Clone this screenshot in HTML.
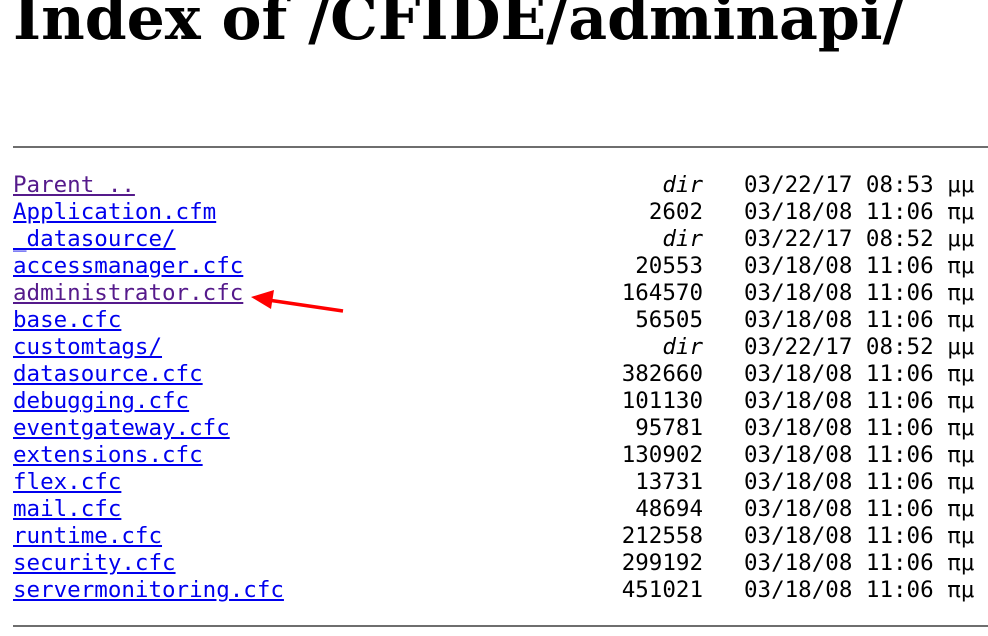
<!DOCTYPE html>
<html><head><meta charset="utf-8"><style>
html,body{margin:0;padding:0;background:#fff;width:988px;height:636px;overflow:hidden;position:relative}
h1{position:absolute;left:13px;top:-21px;margin:0;font:bold 60px/80px "DejaVu Serif","Liberation Serif",serif;white-space:nowrap;color:#000}
.hr{position:absolute;left:13px;width:975px;height:2px;background:#6e6e6e}
.r{position:absolute;left:0;width:988px;height:27px;font:22.5px/27px "DejaVu Sans Mono","Liberation Mono",monospace;color:#000}
.r a{position:absolute;left:13px;color:#0000ee;text-decoration:underline}
.r a.v{color:#551a8b}
.r .s{position:absolute;right:285px}
.r .s i{font-style:italic}
.r .d{position:absolute;left:744px;white-space:pre}
</style></head><body>
<h1>Index of /CFIDE/adminapi/</h1>
<div class="hr" style="top:146px"></div>
<div class="r" style="top:172px"><a class="v">Parent ..</a><span class="s"><i>dir</i></span><span class="d">03/22/17 08:53 μμ</span></div>
<div class="r" style="top:199px"><a>Application.cfm</a><span class="s">2602</span><span class="d">03/18/08 11:06 πμ</span></div>
<div class="r" style="top:226px"><a>_datasource/</a><span class="s"><i>dir</i></span><span class="d">03/22/17 08:52 μμ</span></div>
<div class="r" style="top:253px"><a>accessmanager.cfc</a><span class="s">20553</span><span class="d">03/18/08 11:06 πμ</span></div>
<div class="r" style="top:280px"><a class="v">administrator.cfc</a><span class="s">164570</span><span class="d">03/18/08 11:06 πμ</span></div>
<div class="r" style="top:307px"><a>base.cfc</a><span class="s">56505</span><span class="d">03/18/08 11:06 πμ</span></div>
<div class="r" style="top:334px"><a>customtags/</a><span class="s"><i>dir</i></span><span class="d">03/22/17 08:52 μμ</span></div>
<div class="r" style="top:361px"><a>datasource.cfc</a><span class="s">382660</span><span class="d">03/18/08 11:06 πμ</span></div>
<div class="r" style="top:388px"><a>debugging.cfc</a><span class="s">101130</span><span class="d">03/18/08 11:06 πμ</span></div>
<div class="r" style="top:415px"><a>eventgateway.cfc</a><span class="s">95781</span><span class="d">03/18/08 11:06 πμ</span></div>
<div class="r" style="top:442px"><a>extensions.cfc</a><span class="s">130902</span><span class="d">03/18/08 11:06 πμ</span></div>
<div class="r" style="top:469px"><a>flex.cfc</a><span class="s">13731</span><span class="d">03/18/08 11:06 πμ</span></div>
<div class="r" style="top:496px"><a>mail.cfc</a><span class="s">48694</span><span class="d">03/18/08 11:06 πμ</span></div>
<div class="r" style="top:523px"><a>runtime.cfc</a><span class="s">212558</span><span class="d">03/18/08 11:06 πμ</span></div>
<div class="r" style="top:550px"><a>security.cfc</a><span class="s">299192</span><span class="d">03/18/08 11:06 πμ</span></div>
<div class="r" style="top:577px"><a>servermonitoring.cfc</a><span class="s">451021</span><span class="d">03/18/08 11:06 πμ</span></div>
<div class="hr" style="top:625px"></div>
<svg style="position:absolute;left:0;top:0" width="988" height="636">
<line x1="343" y1="311" x2="268" y2="300" stroke="#f00" stroke-width="3.5"/>
<polygon points="251,297 274,290 271,309" fill="#f00"/>
</svg>
</body></html>
